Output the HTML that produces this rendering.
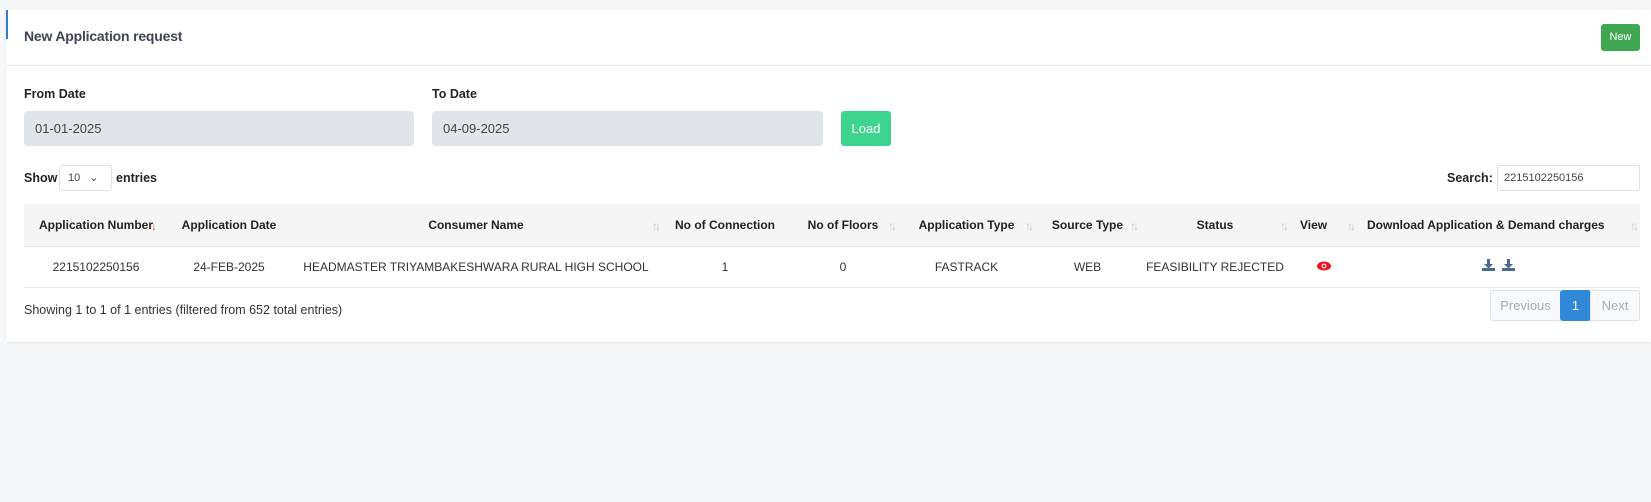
<!DOCTYPE html>
<html><head><meta charset="utf-8"><style>
*{box-sizing:border-box;margin:0;padding:0}
body{width:1651px;height:502px;background:#f6f7f9;font-family:"Liberation Sans",sans-serif;color:#212529;position:relative;overflow:hidden}
.card{position:absolute;left:6px;top:10px;width:1645px;height:332px;background:#fff;box-shadow:0 1px 2px rgba(0,0,0,.08)}
.bl{position:absolute;left:6px;top:10px;width:2px;height:29px;background:#2f7fd0}
.hdr{position:absolute;left:6px;top:10px;width:1645px;height:56px;border-bottom:1px solid #e9ecef}
.title{position:absolute;left:24px;top:28px;font-size:14px;color:#3d4653;font-weight:bold;letter-spacing:-0.2px}
.newb{position:absolute;left:1601px;top:24px;width:39px;height:27px;background:#3fa652;color:#fff;font-size:11px;border-radius:3px;text-align:center;line-height:27px}
.lbl{position:absolute;top:87px;font-size:12.5px;font-weight:bold;color:#212529}
.inp{position:absolute;top:111px;height:35px;background:#e1e4e8;border-radius:4px;font-size:13px;color:#444;padding-left:11px;line-height:35px}
.load{position:absolute;left:841px;top:111px;width:50px;height:35px;background:#3dd48f;color:#fff;border-radius:3px;text-align:center;line-height:35px;font-size:13px}
.show{position:absolute;top:171px;font-size:12.5px;font-weight:bold}
.sel{position:absolute;left:59px;top:165px;width:53px;height:26px;border:1px solid #dee2e6;border-radius:3px;font-size:11px;color:#444;padding-left:8px;line-height:24px}
.srch{position:absolute;left:1497px;top:165px;width:143px;height:26px;border:1px solid #dee2e6;border-radius:2px;font-size:11px;color:#444;padding-left:6px;line-height:24px}
table{position:absolute;left:24px;top:204px;width:1616px;border-collapse:collapse;table-layout:fixed}
th{background:#f5f5f5;height:42px;font-size:12px;font-weight:bold;text-align:center;position:relative;white-space:nowrap;color:#222;border-bottom:1px solid #e6e6e6}
td{height:41px;font-size:12px;text-align:center;white-space:nowrap;color:#333;border-bottom:1px solid #e6e6e6}
.s{position:absolute;right:4px;top:15px;font-size:12px;color:#c4c4c4;letter-spacing:-3px}
.foot{position:absolute;left:24px;top:303px;font-size:12.5px;color:#333}
.pg{position:absolute;top:290px;height:31px;font-size:13px;line-height:29px;text-align:center;border:1px solid #dee2e6;color:#aaa;background:#f8f9fa}
</style></head><body>
<div class="card"></div><div class="hdr"></div><div class="bl"></div>
<div class="title">New Application request</div>
<div class="newb">New</div>
<div class="lbl" style="left:24px">From Date</div>
<div class="lbl" style="left:432px">To Date</div>
<div class="inp" style="left:24px;width:390px">01-01-2025</div>
<div class="inp" style="left:432px;width:391px">04-09-2025</div>
<div class="load">Load</div>
<div class="show" style="left:24px">Show</div>
<div class="sel">10 <span style="margin-left:6px">&#8964;</span></div>
<div class="show" style="left:116px">entries</div>
<div class="show" style="left:1447px">Search:</div>
<div class="srch">2215102250156</div>
<table>
<colgroup><col style="width:144px"><col style="width:122px"><col style="width:372px"><col style="width:126px"><col style="width:110px"><col style="width:137px"><col style="width:105px"><col style="width:150px"><col style="width:67px"><col style="width:283px"></colgroup>
<tr><th>Application Number<span class="s" style="color:#e06a3a;right:14px">↓</span></th><th>Application Date</th><th>Consumer Name<span class="s">↑↓</span></th><th>No of Connection</th><th>No of Floors<span class="s">↑↓</span></th><th>Application Type<span class="s">↑↓</span></th><th>Source Type<span class="s">↑↓</span></th><th>Status<span class="s">↑↓</span></th><th style="text-align:left;padding-left:10px">View<span class="s">↑↓</span></th><th style="text-align:left;padding-left:10px">Download Application &amp; Demand charges<span class="s">↑↓</span></th></tr>
<tr><td>2215102250156</td><td>24-FEB-2025</td><td>HEADMASTER TRIYAMBAKESHWARA RURAL HIGH SCHOOL</td><td>1</td><td>0</td><td>FASTRACK</td><td>WEB</td><td>FEASIBILITY REJECTED</td>
<td><svg width="14" height="10" viewBox="0 0 14 10"><ellipse cx="7" cy="5" rx="7" ry="4.5" fill="#e8141e"/><circle cx="7" cy="5" r="2.4" fill="#fff"/><circle cx="7" cy="5" r="1.4" fill="#e8141e"/></svg></td>
<td><svg width="13" height="12" viewBox="0 0 13 12"><path d="M5 0h3v5h3l-4.5 4.5L2 5h3z" fill="#4a6a8e"/><rect x="0" y="9" width="13" height="3" fill="#4a6a8e"/></svg>&nbsp;&nbsp;<svg width="13" height="12" viewBox="0 0 13 12"><path d="M5 0h3v5h3l-4.5 4.5L2 5h3z" fill="#4a6a8e"/><rect x="0" y="9" width="13" height="3" fill="#4a6a8e"/></svg></td></tr>
</table>
<div class="foot">Showing 1 to 1 of 1 entries (filtered from 652 total entries)</div>
<div class="pg" style="left:1490px;width:71px;border-radius:3px 0 0 3px">Previous</div>
<div class="pg" style="left:1560px;width:31px;background:#2f88d8;color:#fff;border-color:#2f88d8;border-radius:3px">1</div>
<div class="pg" style="left:1590px;width:50px;border-radius:0 3px 3px 0">Next</div>
</body></html>
